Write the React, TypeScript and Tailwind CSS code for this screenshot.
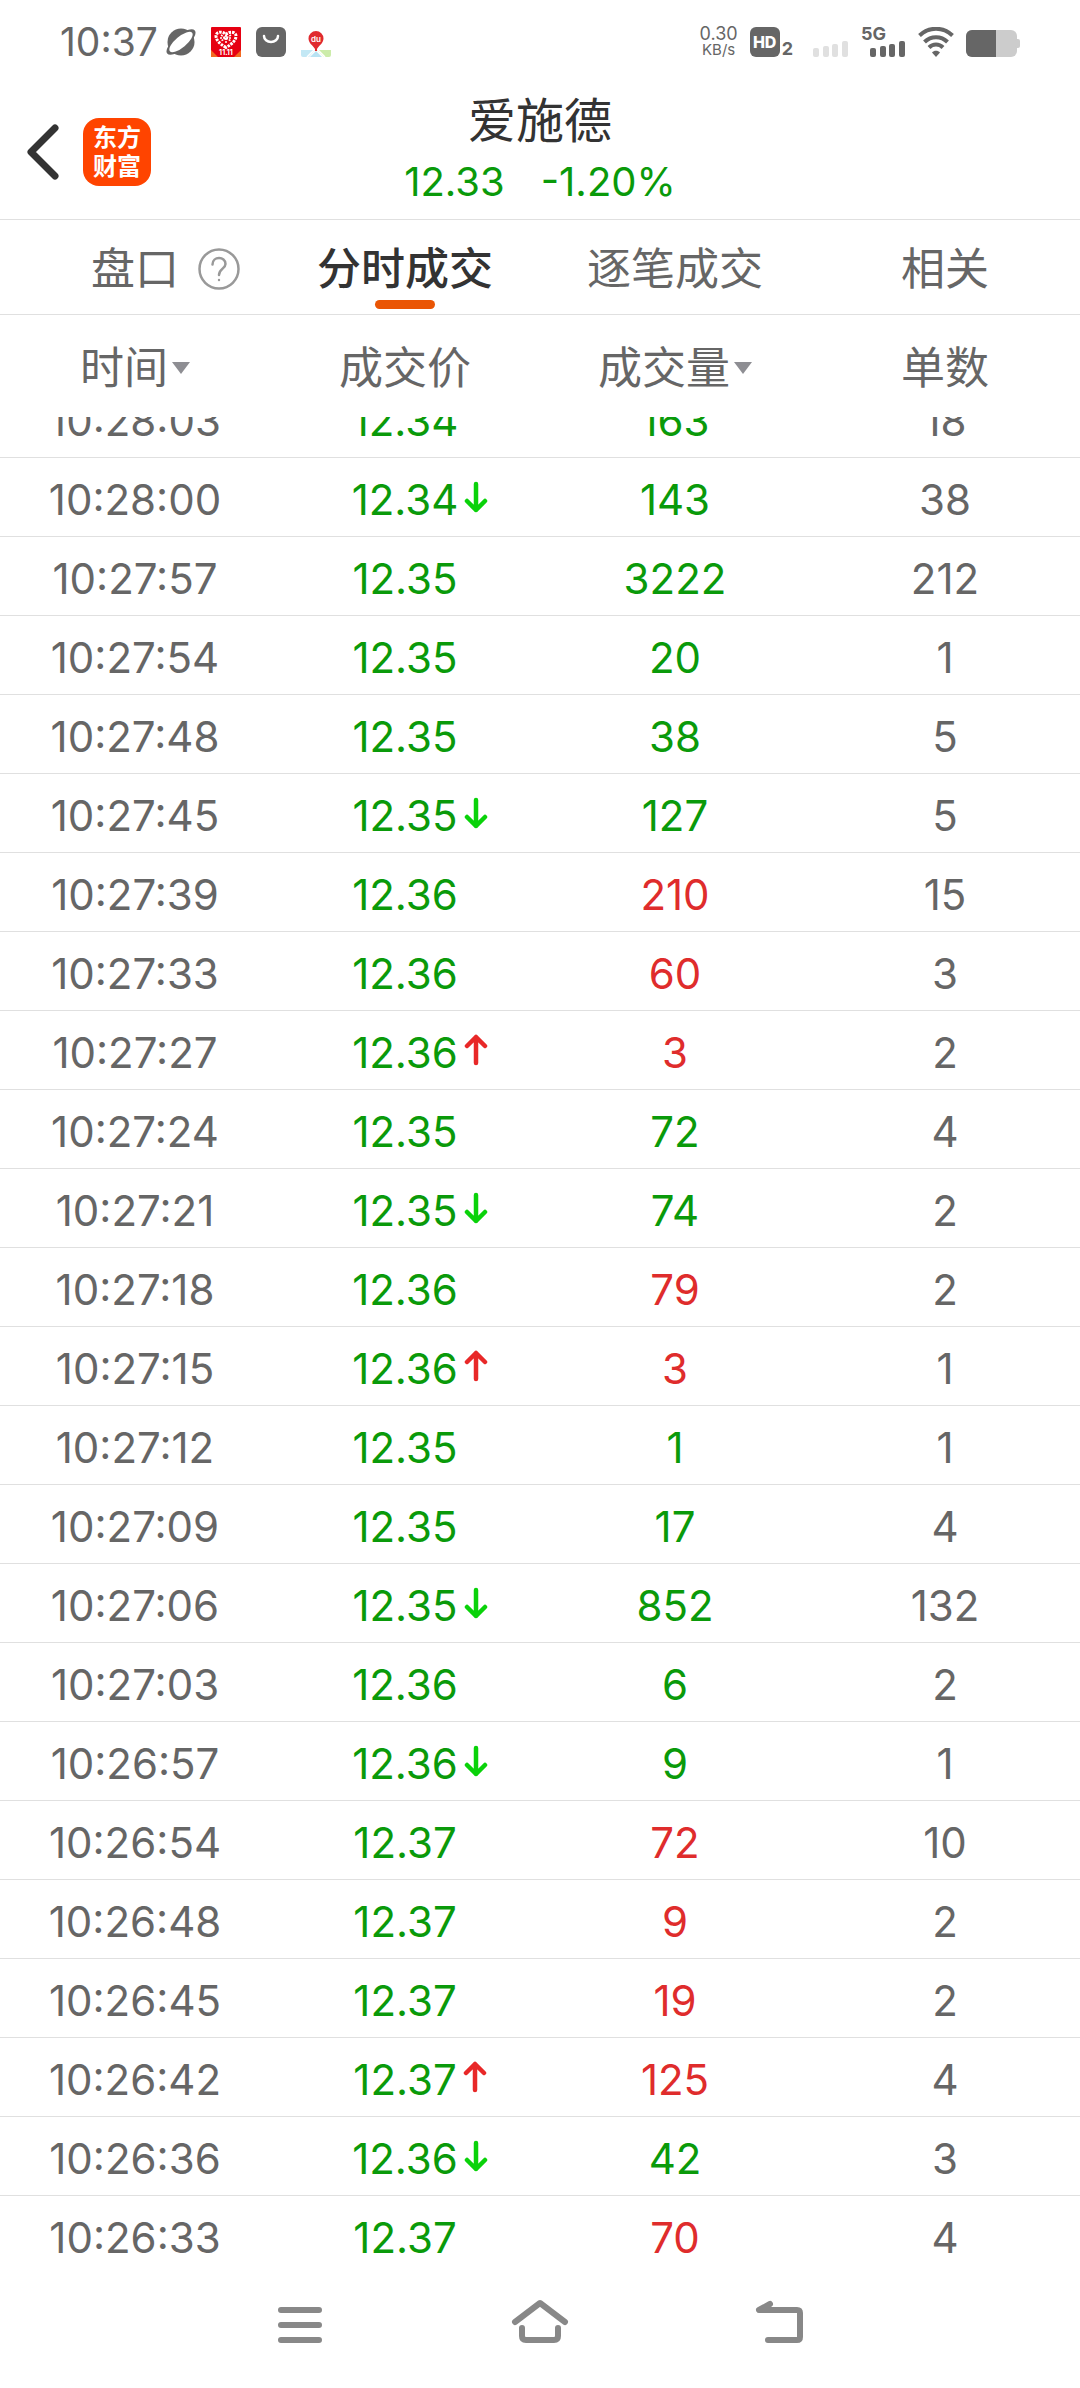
import React, { useLayoutEffect, useRef, useState } from 'react';
import clsx from 'clsx';

type Side = 'buy' | 'sell';
type Move = 'up' | 'down';

interface Tick {
  time: string;
  price: string;
  volume: number;
  orders: number;
  side: Side;
  move?: Move;
}

const ticks: Tick[] = [
  { time: '10:28:03', price: '12.34', volume: 163, orders: 18, side: 'sell' },
  { time: '10:28:00', price: '12.34', volume: 143, orders: 38, side: 'sell', move: 'down' },
  { time: '10:27:57', price: '12.35', volume: 3222, orders: 212, side: 'sell' },
  { time: '10:27:54', price: '12.35', volume: 20, orders: 1, side: 'sell' },
  { time: '10:27:48', price: '12.35', volume: 38, orders: 5, side: 'sell' },
  { time: '10:27:45', price: '12.35', volume: 127, orders: 5, side: 'sell', move: 'down' },
  { time: '10:27:39', price: '12.36', volume: 210, orders: 15, side: 'buy' },
  { time: '10:27:33', price: '12.36', volume: 60, orders: 3, side: 'buy' },
  { time: '10:27:27', price: '12.36', volume: 3, orders: 2, side: 'buy', move: 'up' },
  { time: '10:27:24', price: '12.35', volume: 72, orders: 4, side: 'sell' },
  { time: '10:27:21', price: '12.35', volume: 74, orders: 2, side: 'sell', move: 'down' },
  { time: '10:27:18', price: '12.36', volume: 79, orders: 2, side: 'buy' },
  { time: '10:27:15', price: '12.36', volume: 3, orders: 1, side: 'buy', move: 'up' },
  { time: '10:27:12', price: '12.35', volume: 1, orders: 1, side: 'sell' },
  { time: '10:27:09', price: '12.35', volume: 17, orders: 4, side: 'sell' },
  { time: '10:27:06', price: '12.35', volume: 852, orders: 132, side: 'sell', move: 'down' },
  { time: '10:27:03', price: '12.36', volume: 6, orders: 2, side: 'sell' },
  { time: '10:26:57', price: '12.36', volume: 9, orders: 1, side: 'sell', move: 'down' },
  { time: '10:26:54', price: '12.37', volume: 72, orders: 10, side: 'buy' },
  { time: '10:26:48', price: '12.37', volume: 9, orders: 2, side: 'buy' },
  { time: '10:26:45', price: '12.37', volume: 19, orders: 2, side: 'buy' },
  { time: '10:26:42', price: '12.37', volume: 125, orders: 4, side: 'buy', move: 'up' },
  { time: '10:26:36', price: '12.36', volume: 42, orders: 3, side: 'sell', move: 'down' },
  { time: '10:26:33', price: '12.37', volume: 70, orders: 4, side: 'buy' },
];

const tabs = ['盘口', '分时成交', '逐笔成交', '相关'];

function SignalBars({ className }: { className: string }) {
  return (
    <svg className={className} width="36" height="16" viewBox="0 0 36 16" fill="currentColor">
      <rect x="0" y="7" width="6" height="9" rx="2" />
      <rect x="10" y="5" width="6" height="11" rx="2" />
      <rect x="19" y="3" width="6" height="13" rx="2" />
      <rect x="29" y="0" width="6" height="16" rx="2" />
    </svg>
  );
}

function StatusBar() {
  return (
    <div className="flex h-[84px] shrink-0 items-center justify-between px-[60px] text-[#666]">
      <div className="flex items-center gap-2">
        <span className="text-[39px] leading-[42px]">10:37</span>
        <div className="flex gap-[15px]">
          <svg width="30" height="30" viewBox="0 0 30 30" fill="#666">
            <ellipse cx="15" cy="15" rx="18" ry="7" transform="rotate(-40 15 15)" />
            <circle cx="15" cy="15" r="13.5" />
            <ellipse cx="15" cy="15" rx="14.5" ry="5.5" transform="rotate(-40 15 15)" fill="#fff" />
          </svg>
          <svg width="30" height="30" viewBox="0 0 30 30">
            <rect width="30" height="30" rx="1" fill="#e60012" />
            <path d="M0 23 7 30H0ZM30 23 23 30H30Z" fill="#f26a21" />
            <path d="M15 20.500C8 16.500 5 12.500 5 9C5 5 11 3.500 15 7.500C19 3.500 25 5 25 9C25 12.500 22 16.500 15 20.500Z" fill="none" stroke="#fff" strokeWidth="3" strokeDasharray="2.500 1" />
            <path d="M10 8l10 6M20 8l-10 6M15 8v9M9 11h12" stroke="#fff" strokeWidth="1.500" strokeDasharray="2 1" />
            <text x="15" y="28" textAnchor="middle" fontSize="7" fontWeight="700" fill="#fff">11.11</text>
          </svg>
          <svg width="30" height="30" viewBox="0 0 30 30">
            <rect width="30" height="30" rx="6" fill="#666" />
            <path d="M8 9a7 6 0 0 0 14 0" fill="none" stroke="#fff" strokeWidth="2.500" strokeLinecap="round" />
          </svg>
          <svg width="30" height="30" viewBox="0 0 30 30">
            <path d="M0 23h14l-6 7H2a2 2 0 0 1-2-2Z" fill="#c3e8f5" />
            <path d="M16 23h14v5a2 2 0 0 1-2 2h-5Z" fill="#ccecaa" />
            <path d="M15 24l6 6H9Z" fill="#b8e3f3" />
            <path d="M13 23 6 30M17 23l7 7" stroke="#fff" strokeWidth="1.500" />
            <path d="M15 4a7.500 7.500 0 0 1 7.500 7.500c0 4.500-4.500 7-6.500 10.500v2h-2v-2c-2-3.500-6.500-6-6.500-10.500A7.500 7.500 0 0 1 15 4Z" fill="#e02a2f" />
            <text x="15" y="15" textAnchor="middle" fontSize="8" fontWeight="600" fill="#fff">du</text>
          </svg>
        </div>
      </div>
      <div className="flex items-center">
        <div className="flex flex-col items-center">
          <span className="text-[18px] leading-[16px]">0.30</span>
          <span className="text-[15px] leading-[16px]">KB/s</span>
        </div>
        <div className="ml-3 flex items-end gap-[2px]">
          <span className="flex size-[30px] items-center justify-center rounded-md bg-[#666] text-[16px] leading-[20px] font-extrabold text-white">HD</span>
          <span className="text-[18px] leading-[16px] font-bold">2</span>
        </div>
        <SignalBars className="ml-5 mt-[14px] text-[#e0e0e0]" />
        <div className="ml-3 flex h-[30px] w-[45px] flex-col">
          <span className="text-[18px] leading-[14px] font-bold">5G</span>
          <SignalBars className="ml-[9px] shrink-0" />
        </div>
        <svg className="ml-3" width="36" height="30" viewBox="0 0 36 30" fill="none" stroke="#666" strokeWidth="4">
          <path d="M1.500 8.500C11 -.5 25 -.5 34.500 8.500" />
          <path d="M6.500 15C13 8.500 23 8.500 29.500 15" />
          <path d="M11 20.500C15 16.500 21 16.500 25 20.500" />
          <path d="M14 25.500C16 23 20 23 22 25.500L18 30Z" fill="#666" stroke="none" />
        </svg>
        <svg className="mt-[3px] ml-3" width="54" height="27" viewBox="0 0 54 27">
          <rect width="51" height="27" rx="6" fill="#ccc" />
          <rect x="49" y="9" width="5" height="9" rx="2" fill="#ccc" />
          <path d="M6 0H30V27H6A6 6 0 0 1 0 21V6A6 6 0 0 1 6 0Z" fill="#666" />
        </svg>
      </div>
    </div>
  );
}

function Header() {
  return (
    <header className="grid h-[136px] shrink-0 grid-cols-[1fr_auto_1fr] border-b border-[#e0e0e0]">
      <div className="flex items-center pl-[27px]">
        <button aria-label="返回">
          <svg width="32" height="56" viewBox="0 0 32 56" fill="none" stroke="#333" strokeWidth="7" strokeLinecap="round" strokeLinejoin="round">
            <path d="M28 4 4 28 28 52" />
          </svg>
        </button>
        <div className="ml-6 flex size-[68px] flex-col items-center justify-center rounded-2xl bg-[#ff4400] text-2xl leading-[29px] font-bold text-white">
          <span>东方</span>
          <span>财富</span>
        </div>
      </div>
      <div className="flex flex-col items-center pt-[5px]">
        <h1 className="text-[48px] leading-[64px] text-[#333]">爱施德</h1>
        <div className="flex gap-[36px] text-[40px] leading-[58px] text-[#0a9a0a]">
          <span>12.33</span>
          <span>-1.20%</span>
        </div>
      </div>
    </header>
  );
}

function Caret() {
  return (
    <svg width="18" height="12" viewBox="0 0 18 12" fill="#8e8e93">
      <path d="M0 0H18L9 12Z" />
    </svg>
  );
}

function MoveArrow({ move }: { move: Move }) {
  return (
    <svg
      className="absolute top-1/2 left-full ml-[6px] -translate-y-[18px]"
      width="24"
      height="32"
      viewBox="0 0 24 32"
      fill="none"
      stroke={move === 'up' ? '#e82828' : '#0ad20a'}
      strokeWidth="4.5"
      strokeLinecap="round"
      strokeLinejoin="round"
    >
      <path d={move === 'up' ? 'M12 29V3M3 12l9-9 9 9' : 'M12 3v26M3 20l9 9 9-9'} />
    </svg>
  );
}

export default function App() {
  const [active, setActive] = useState('分时成交');
  const listRef = useRef<HTMLDivElement>(null);

  // the list opens a little way down from its newest tick
  useLayoutEffect(() => {
    if (listRef.current) listRef.current.scrollTop = 38;
  }, []);

  return (
    <div className="flex h-screen flex-col bg-white font-['Inter','Noto_Sans_CJK_SC',sans-serif]">
      <StatusBar />
      <Header />

      <nav className="grid h-[95px] shrink-0 grid-cols-4 border-b border-[#e0e0e0]">
        {tabs.map(tab => (
          <button
            key={tab}
            onClick={() => setActive(tab)}
            className={clsx('relative pt-1 text-[44px] leading-[60px]', tab === active ? 'font-medium text-[#333]' : 'text-[#666]')}
          >
            <span className="relative">
              {tab}
              {tab === '盘口' && (
                <svg className="absolute top-1/2 left-full ml-[19px] -translate-y-1/2" width="42" height="42" viewBox="0 0 42 42" fill="none" stroke="#999" strokeWidth="2.500">
                  <circle cx="21" cy="21" r="19.500" />
                  <path d="M14.500 16.500C14.500 8 27.500 8 27.500 16C27.500 20.500 21 21 21 27" strokeLinecap="round" />
                  <circle cx="21" cy="32" r="1.200" fill="#999" stroke="none" />
                </svg>
              )}
            </span>
            {tab === active && <span className="absolute bottom-[5px] left-1/2 h-[9px] w-[60px] -translate-x-1/2 rounded-full bg-[#ea5504]" />}
          </button>
        ))}
      </nav>

      {/* tick list */}
      <div ref={listRef} className="min-h-0 flex-1 overflow-y-auto [scrollbar-width:none]">
        <table className="w-full table-fixed border-separate border-spacing-0 text-center">
          <thead className="sticky top-0 z-10 bg-white">
            <tr className="h-[102px] text-[44px] leading-[60px] text-[#666]">
              <th className="pt-1 font-normal">
                <button className="inline-flex items-center gap-1">时间<Caret /></button>
              </th>
              <th className="pt-1 font-normal">成交价</th>
              <th className="pt-1 font-normal">
                <button className="inline-flex items-center gap-1">成交量<Caret /></button>
              </th>
              <th className="pt-1 font-normal">单数</th>
            </tr>
          </thead>
          <tbody className="text-[42px] leading-[60px] text-[#666]">
            {ticks.map(t => (
              <tr key={t.time} className="h-[79px]">
                <td className="border-b border-[#e0e0e0] pt-[5px]">{t.time}</td>
                <td className="border-b border-[#e0e0e0] pt-[5px] text-[#0a9a0a]">
                  <span className="relative">
                    {t.price}
                    {t.move && <MoveArrow move={t.move} />}
                  </span>
                </td>
                <td className={clsx('border-b border-[#e0e0e0] pt-[5px]', t.side === 'buy' ? 'text-[#df2c2c]' : 'text-[#0a9a0a]')}>{t.volume}</td>
                <td className="border-b border-[#e0e0e0] pt-[5px]">{t.orders}</td>
              </tr>
            ))}
          </tbody>
        </table>
      </div>

      {/* system navigation */}
      <div className="flex h-[126px] shrink-0 items-center justify-center gap-[180px]">
        <button aria-label="菜单">
          <svg width="60" height="60" viewBox="0 0 60 60" fill="none" stroke="#888" strokeWidth="6" strokeLinecap="round">
            <path d="M11 15H49M11 30H49M11 45H49" />
          </svg>
        </button>
        <button aria-label="主页">
          <svg width="60" height="60" viewBox="0 0 60 60" fill="none" stroke="#888" strokeWidth="6" strokeLinecap="round" strokeLinejoin="round">
            <path d="M5 27 30 8 55 27" />
            <path d="M12 33V41Q12 45 16 45H44Q48 45 48 41V33" />
          </svg>
        </button>
        <button aria-label="后退">
          <svg width="60" height="60" viewBox="0 0 60 60" fill="none" stroke="#888" strokeWidth="6" strokeLinecap="round" strokeLinejoin="round">
            <path d="M20 9 9 15H47Q50 15 50 18V42Q50 45 47 45H18" />
          </svg>
        </button>
      </div>
    </div>
  );
}
